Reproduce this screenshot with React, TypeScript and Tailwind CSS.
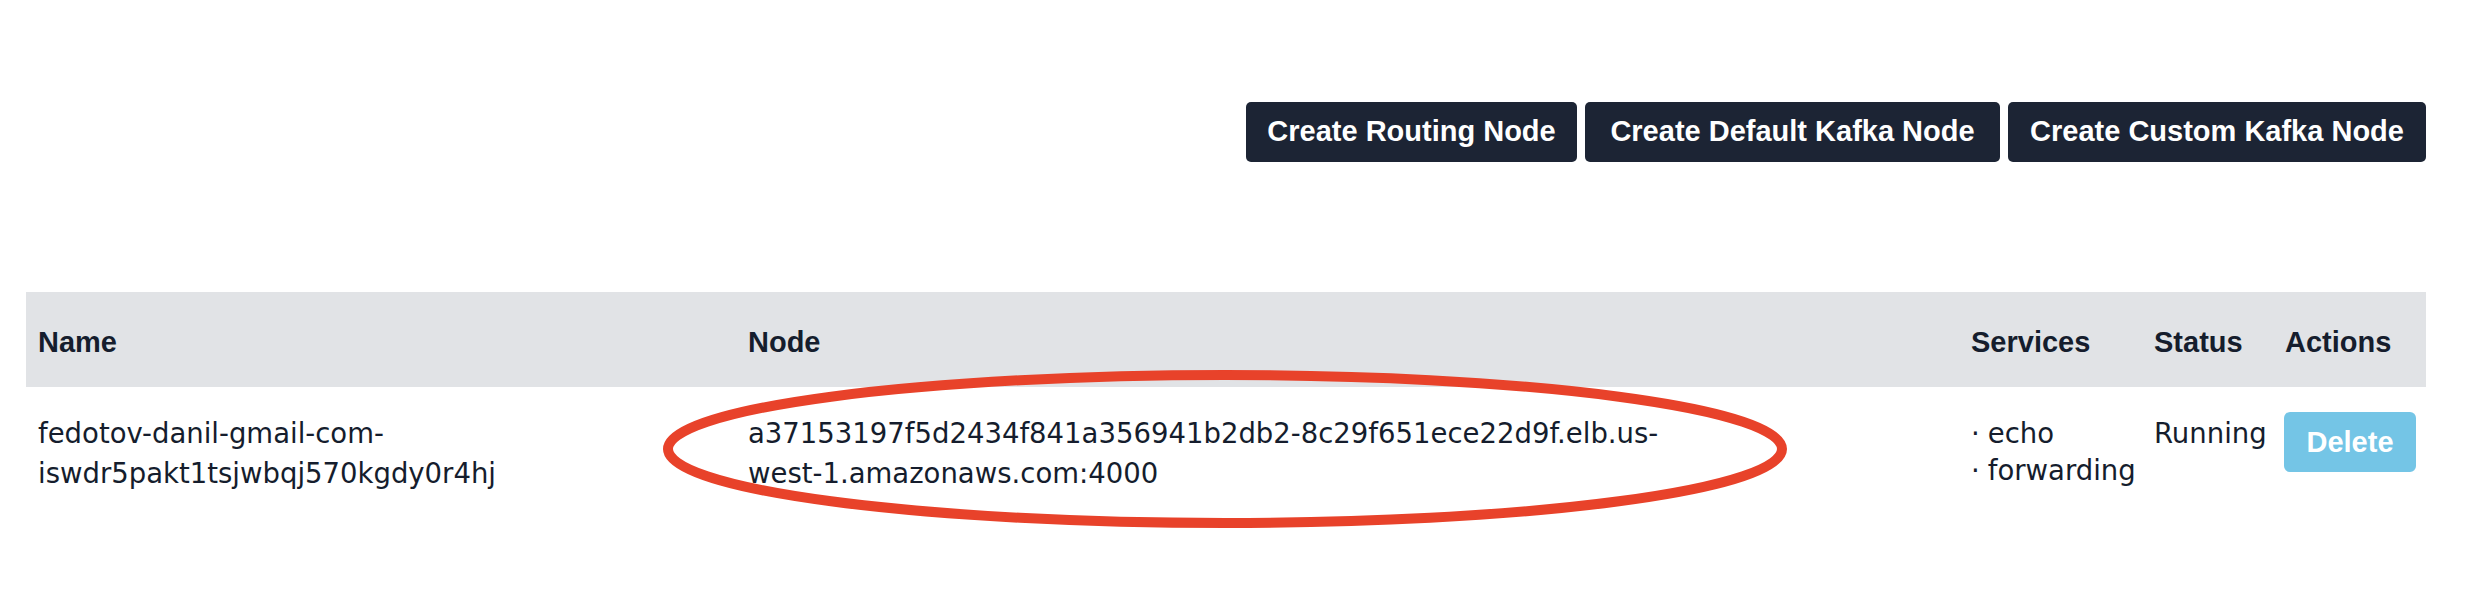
const services = ['echo', 'forwarding'];

export default function App() {
  return (
    <div className="relative w-[2490px] h-[600px] bg-white text-[#151d2d]">
      <div className="pl-[26px] pr-[64px] pt-[102px]">
        <div className="flex justify-end gap-2 font-['Liberation_Sans',Arial,sans-serif] font-bold text-[29px] text-white">
          <button className="w-[331px] h-[60px] rounded-[5px] bg-[#1c2434]">Create Routing Node</button>
          <button className="w-[415px] h-[60px] rounded-[5px] bg-[#1c2434]">Create Default Kafka Node</button>
          <button className="w-[418px] h-[60px] rounded-[5px] bg-[#1c2434]">Create Custom Kafka Node</button>
        </div>

        <table className="mt-[130px] w-[2400px] table-fixed border-collapse text-left">
          <thead className="bg-[#e1e3e6] font-['Liberation_Sans',Arial,sans-serif] font-bold text-[29px] leading-[40px]">
            <tr className="h-[95px]">
              <th className="w-[710px] px-3 pt-[4px]">Name</th>
              <th className="w-[1223px] px-3 pt-[4px]">Node</th>
              <th className="w-[183px] px-3 pt-[4px]">Services</th>
              <th className="w-[131px] px-3 pt-[4px]">Status</th>
              <th className="w-[153px] px-3 pt-[4px]">Actions</th>
            </tr>
          </thead>
          <tbody className="font-['DejaVu_Sans',sans-serif] text-[27.5px] leading-[40px]">
            <tr>
              <td className="px-3 pt-[26px] align-top">fedotov-danil-gmail-com-iswdr5pakt1tsjwbqj570kgdy0r4hj</td>
              <td className="px-3 pt-[26px] align-top">
                <span className="block">a37153197f5d2434f841a356941b2db2-8c29f651ece22d9f.elb.us-</span>
                <span className="block">west-1.amazonaws.com:4000</span>
              </td>
              <td className="px-3 pt-[28px] align-top">
                <ul className="leading-[37px]">
                  {services.map((s) => (
                    <li key={s} className="flex gap-[8px]">
                      <span>·</span>
                      <span>{s}</span>
                    </li>
                  ))}
                </ul>
              </td>
              <td className="px-3 pt-[26px] align-top">Running</td>
              <td className="px-[11px] pt-[25px] align-top">
                <button className="w-[132px] h-[60px] rounded-[6px] bg-[#74c5e6] text-white font-['Liberation_Sans',Arial,sans-serif] font-bold text-[29px]">
                  Delete
                </button>
              </td>
            </tr>
          </tbody>
        </table>
      </div>

      {/* red annotation ring over the node address */}
      <svg className="absolute inset-0 pointer-events-none" width="2490" height="600">
        <ellipse cx="1225" cy="449" rx="557" ry="74" fill="none" stroke="#e8422a" strokeWidth="10" />
      </svg>
    </div>
  );
}
